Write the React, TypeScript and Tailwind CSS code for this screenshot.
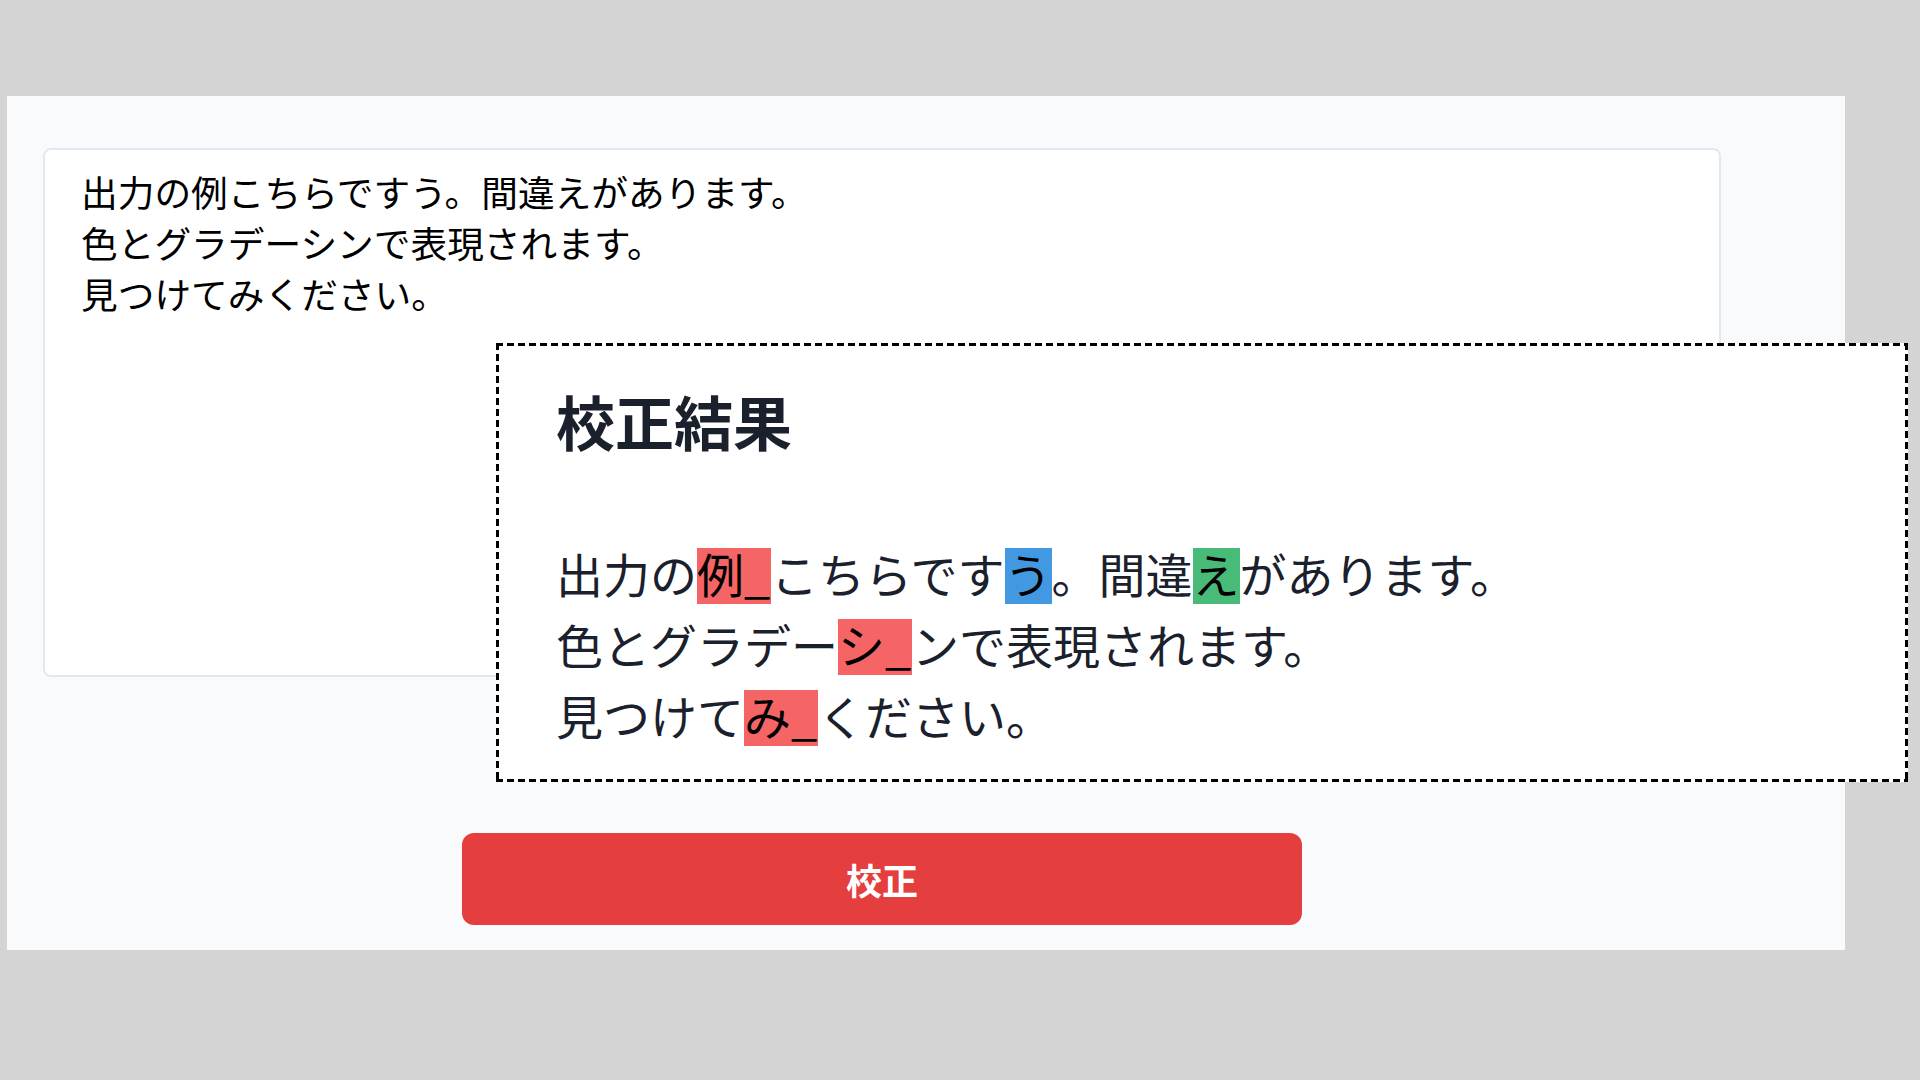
import React from "react";

type Seg = { t: string; c?: "red" | "blue" | "green" };

const lines: Seg[][] = [
  [
    { t: "出力の" },
    { t: "例_", c: "red" },
    { t: "こちらです" },
    { t: "う", c: "blue" },
    { t: "。間違" },
    { t: "え", c: "green" },
    { t: "があります。" },
  ],
  [{ t: "色とグラデー" }, { t: "シ_", c: "red" }, { t: "ンで表現されます。" }],
  [{ t: "見つけて" }, { t: "み_", c: "red" }, { t: "ください。" }],
];

function SegView({ s }: { s: Seg }) {
  const parts = s.t.split("_");
  const content =
    parts.length > 1 ? (
      <>
        {parts[0]}
        <span className="inline-block w-[27px]">_</span>
        {parts[1]}
      </>
    ) : (
      s.t
    );
  if (s.c === "red")
    return <span className="block h-[56px] leading-[50px] bg-[#f56565] text-black whitespace-pre">{content}</span>;
  if (s.c === "blue")
    return <span className="block h-[56px] leading-[50px] bg-[#4299e1] text-black whitespace-pre">{content}</span>;
  if (s.c === "green")
    return <span className="block h-[56px] leading-[50px] bg-[#48bb78] text-black whitespace-pre">{content}</span>;
  return <span className="block h-[56px] leading-[50px] whitespace-pre">{content}</span>;
}

export default function App() {
  return (
    <div
      className="w-[1920px] h-[1080px] bg-[#d4d4d4] overflow-hidden pt-[96px] pl-[7px]"
      style={{ fontFamily: '"Noto Sans CJK JP", "Noto Sans", sans-serif' }}
    >
      <div className="relative w-[1838px] h-[854px] bg-[#f8fafc] pl-[36px] pr-[124px] pt-[52px]">
        <textarea
          readOnly
          className="block w-[1678px] h-[529px] resize-none rounded-lg border-2 border-[#e2e8f0] bg-white px-[36px] pt-[16px] text-[36.7px] leading-[51px] text-black outline-none"
          defaultValue={"出力の例こちらですう。間違えがあります。\n色とグラデーシンで表現されます。\n見つけてみください。"}
        />
        <button className="mx-auto mt-[156px] flex h-[92px] w-[840px] items-center justify-center rounded-xl bg-[#e53e3e] text-[36px] font-bold text-white">
          校正
        </button>

        <div className="absolute left-[489px] top-[247px] w-[1412px] h-[439px] bg-white bg-[repeating-linear-gradient(90deg,#000_0_7px,transparent_7px_11px),repeating-linear-gradient(90deg,#000_0_7px,transparent_7px_11px),repeating-linear-gradient(180deg,#000_0_7px,transparent_7px_11px),repeating-linear-gradient(180deg,#000_0_7px,transparent_7px_11px)] bg-[size:100%_3px,100%_3px,3px_100%,3px_100%] bg-[position:0_0,0_100%,0_0,100%_0] bg-no-repeat pl-[60px] pt-[48px]">
          <h2 className="text-[59px] leading-[60px] font-bold text-[#1a202c]">校正結果</h2>
          <div className="mt-[89px] text-[47px] text-[#1a202c]">
            {lines.map((line, i) => (
              <div key={i} className="flex h-[71px] items-center">
                {line.map((s, j) => (
                  <SegView key={j} s={s} />
                ))}
              </div>
            ))}
          </div>
        </div>
      </div>
    </div>
  );
}
